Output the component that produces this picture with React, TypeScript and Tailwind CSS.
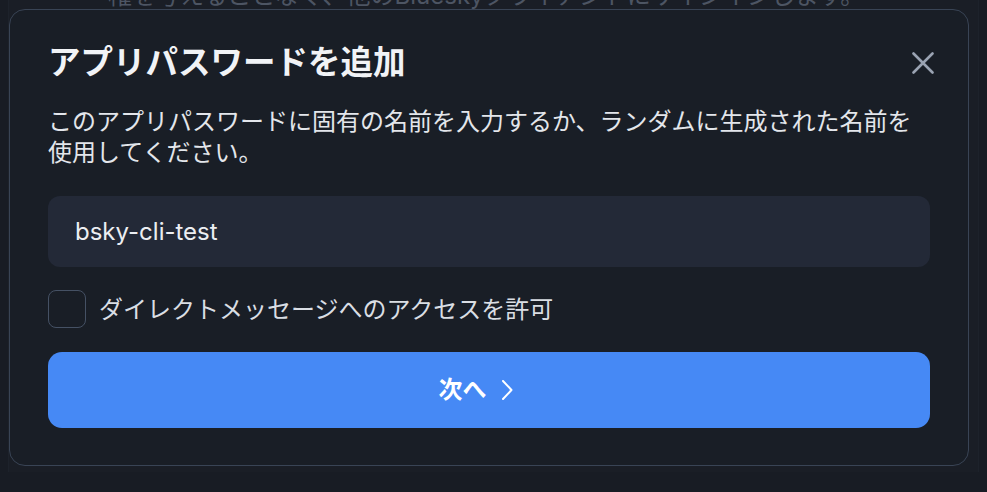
const font = "font-['Inter','Noto_Sans_CJK_JP',sans-serif]";

export default function App() {
  return (
    <div className={`relative h-[492px] w-[987px] overflow-hidden bg-[#181c24] ${font}`}>
      {/* page behind the modal */}
      <div className="mx-[8px] h-full border-x border-[#1d222b] bg-[#1a1e26]">
        <p className="-mt-[20px] pl-[99px] text-[24px] leading-[31px] text-[#4d5563]">
          権を与えることなく、他のBlueskyクライアントにサインインします。
        </p>
      </div>

      {/* dialog */}
      <div className="absolute left-[9px] top-[9px] w-[960px] rounded-[16px] border border-[#394455] bg-[#191e26] px-[38px] pb-[37px] pt-[33px]">
        <div className="flex items-center justify-between">
          <h1 className="text-[32.5px] font-bold leading-[40px] text-[#f1f3f6]">
            アプリパスワードを追加
          </h1>
          <button className="mr-[-13px] flex h-[40px] w-[40px] items-center justify-center text-[#9aa3b2]">
            <svg width="22" height="22" viewBox="0 0 22 22" fill="none" stroke="currentColor" strokeWidth="2.6" strokeLinecap="round">
              <path d="M1.5 1.5 L20.5 20.5 M20.5 1.5 L1.5 20.5" />
            </svg>
          </button>
        </div>

        <p className="mt-[23px] text-[24px] leading-[31px] text-[#e3e6eb]">
          このアプリパスワードに固有の名前を入力するか、ランダムに生成された名前を使用してください。
        </p>

        <div className="mt-[28px] flex h-[71px] items-center rounded-[12px] bg-[#232937] px-[27px] text-[24px] text-[#eceef2]">
          bsky-cli-test
        </div>

        <label className="mt-[23px] flex items-center gap-[13px]">
          <span className="h-[38px] w-[38px] rounded-[8px] border border-[#455164]" />
          <span className="text-[24px] leading-[31px] text-[#dadee4]">
            ダイレクトメッセージへのアクセスを許可
          </span>
        </label>

        <button className="mt-[24px] flex h-[76px] w-full items-center justify-center gap-[14px] rounded-[14px] bg-[#4689f5] pr-[27px] text-[24px] font-semibold text-white">
          <span>次へ</span>
          <svg width="12" height="20" viewBox="0 0 12 20" fill="none" stroke="currentColor" strokeWidth="2" strokeLinecap="round" strokeLinejoin="round">
            <path d="M2 1 L10.5 10 L2 19" />
          </svg>
        </button>
      </div>
    </div>
  );
}
